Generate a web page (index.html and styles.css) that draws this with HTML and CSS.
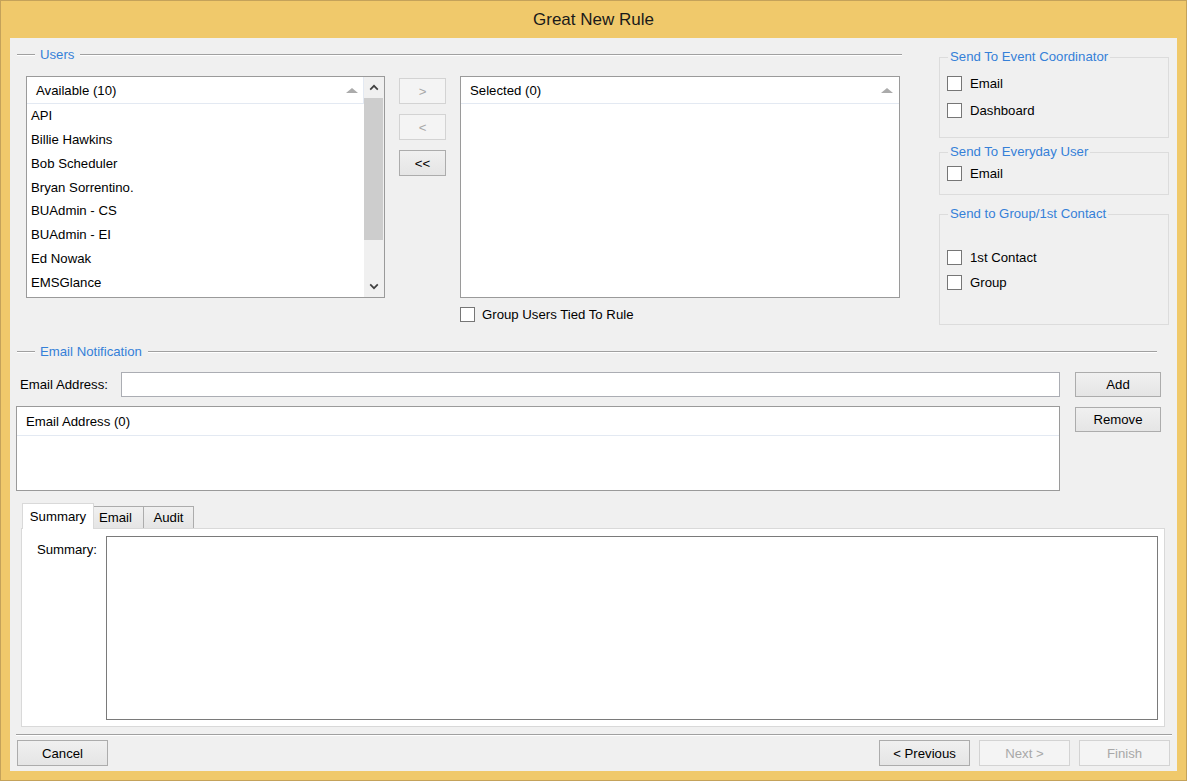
FILE: index.html
```html
<!DOCTYPE html>
<html>
<head>
<meta charset="utf-8">
<title>Great New Rule</title>
<link rel="stylesheet" href="styles.css">
</head>
<body>
<div class="window">
  <div class="titlebar">Great New Rule</div>
  <div class="client">
    <div class="top">
      <div class="users">
        <div class="legend"><span class="lead"></span><span class="ltext">Users</span><span class="rule"></span></div>
        <div class="lists">
          <div class="listbox avail">
            <div class="lb-main">
              <div class="lb-head hd-avail"><span>Available (10)</span><span class="sort"></span></div>
              <div class="lb-item">API</div>
              <div class="lb-item">Billie Hawkins</div>
              <div class="lb-item">Bob Scheduler</div>
              <div class="lb-item">Bryan Sorrentino.</div>
              <div class="lb-item">BUAdmin - CS</div>
              <div class="lb-item">BUAdmin - EI</div>
              <div class="lb-item">Ed Nowak</div>
              <div class="lb-item">EMSGlance</div>
            </div>
            <div class="vscroll">
              <div class="sb-btn"><svg width="10" height="7" viewBox="0 0 10 7"><polyline points="1.2,5.6 5,1.8 8.8,5.6" fill="none" stroke="#404040" stroke-width="1.7"/></svg></div>
              <div class="sb-thumb"></div>
              <div class="sb-track"></div>
              <div class="sb-btn"><svg width="10" height="7" viewBox="0 0 10 7"><polyline points="1.2,1.4 5,5.2 8.8,1.4" fill="none" stroke="#404040" stroke-width="1.7"/></svg></div>
            </div>
          </div>
          <div class="movebtns">
            <div class="btn disabled">&gt;</div>
            <div class="btn disabled">&lt;</div>
            <div class="btn">&lt;&lt;</div>
          </div>
          <div class="selcol">
            <div class="listbox sel">
              <div class="lb-main">
                <div class="lb-head"><span>Selected (0)</span><span class="sort"></span></div>
              </div>
            </div>
            <div class="chk grp"><span class="box"></span><span>Group Users Tied To Rule</span></div>
          </div>
        </div>
      </div>
      <div class="sendcol">
        <fieldset class="gbox g1">
          <legend>Send To Event Coordinator</legend>
          <div class="gc">
            <div class="chk"><span class="box"></span><span>Email</span></div>
            <div class="chk"><span class="box"></span><span>Dashboard</span></div>
          </div>
        </fieldset>
        <fieldset class="gbox g2">
          <legend>Send To Everyday User</legend>
          <div class="gc">
            <div class="chk"><span class="box"></span><span>Email</span></div>
          </div>
        </fieldset>
        <fieldset class="gbox g3">
          <legend>Send to Group/1st Contact</legend>
          <div class="gc">
            <div class="chk"><span class="box"></span><span>1st Contact</span></div>
            <div class="chk"><span class="box"></span><span>Group</span></div>
          </div>
        </fieldset>
      </div>
    </div>

    <div class="legend notif"><span class="lead"></span><span class="ltext">Email Notification</span><span class="rule"></span></div>

    <div class="emailarea">
      <div class="eleft">
        <div class="erow">
          <span class="elabel">Email Address:</span>
          <div class="einput"></div>
        </div>
        <div class="listbox elist">
          <div class="lb-main">
            <div class="lb-head"><span>Email Address (0)</span></div>
          </div>
        </div>
      </div>
      <div class="eright">
        <div class="btn">Add</div>
        <div class="btn">Remove</div>
      </div>
    </div>

    <div class="tabs">
      <div class="tabstrip">
        <div class="tab active">Summary</div>
        <div class="tab t-email">Email</div>
        <div class="tab t-audit">Audit</div>
      </div>
      <div class="tabpage">
        <span class="plabel">Summary:</span>
        <div class="summary-box"></div>
      </div>
    </div>

    <div class="sep"></div>

    <div class="footer">
      <div class="btn fbtn">Cancel</div>
      <div class="fright">
        <div class="btn fbtn">&lt; Previous</div>
        <div class="btn fbtn disabled">Next &gt;</div>
        <div class="btn fbtn disabled">Finish</div>
      </div>
    </div>
  </div>
</div>
</body>
</html>
```

FILE: styles.css
```css
* { box-sizing: border-box; }

body {
  margin: 0;
  font-family: "Liberation Sans", Arial, sans-serif;
  font-size: 13.2px;
  color: #000;
}

.window {
  width: 1187px;
  height: 781px;
  background: #F0C96B;
  border: 1px solid #C4A25A;
  padding: 0 9px 9px 9px;
  display: flex;
  flex-direction: column;
}

.titlebar {
  height: 37px;
  line-height: 37px;
  text-align: center;
  font-size: 17px;
  color: #1a1a1a;
}

.client {
  flex: 1;
  background: #F0F0F0;
  display: flex;
  flex-direction: column;
}

/* ---------- top section ---------- */
.top {
  display: flex;
  margin-top: 10px;
  height: 277px;
}

.users {
  margin-left: 7px;
  width: 885px;
}

.legend {
  display: flex;
  align-items: center;
  height: 14px;
}
.legend .lead {
  width: 18px;
  height: 2px;
  border-top: 1px solid #A0A0A0;
  border-bottom: 1px solid #FFFFFF;
}
.legend .ltext {
  color: #3580D8;
  margin: 0 6px 0 5px;
  line-height: 14px;
}
.legend .rule {
  flex: 1;
  height: 2px;
  border-top: 1px solid #A0A0A0;
  border-bottom: 1px solid #FFFFFF;
}

.lists {
  display: flex;
  align-items: flex-start;
  margin-top: 14px;
}

.listbox {
  border: 1px solid #9A9A9A;
  background: #FFFFFF;
  display: flex;
}
.lb-main {
  flex: 1;
  display: flex;
  flex-direction: column;
  min-width: 0;
}
.lb-head {
  height: 27px;
  display: flex;
  align-items: center;
  justify-content: space-between;
  padding: 0 6px 0 9px;
  border-bottom: 1px solid #E3E9F2;
}
.hd-avail {
  border-right: 1px solid #E3E9F2;
  padding-right: 5px;
}
.sort {
  width: 0;
  height: 0;
  border-left: 6px solid transparent;
  border-right: 6px solid transparent;
  border-bottom: 5px solid #ABABAB;
  margin-top: 1px;
}
.lb-item {
  height: 23.86px;
  line-height: 23.86px;
  padding-left: 4px;
  white-space: nowrap;
}

.avail {
  margin-left: 9px;
  width: 359px;
  height: 222px;
}
.vscroll {
  width: 20px;
  background: #F0F0F0;
  display: flex;
  flex-direction: column;
}
.sb-btn {
  height: 21px;
  display: flex;
  align-items: center;
  justify-content: center;
}
.sb-thumb {
  height: 142px;
  background: #CDCDCD;
  margin: 0 1px 0 0;
}
.sb-track { flex: 1; }

.movebtns {
  margin-left: 14px;
  margin-top: 2px;
  width: 47px;
  display: flex;
  flex-direction: column;
  gap: 10px;
}
.movebtns .btn { height: 26px; }

.selcol {
  margin-left: 14px;
  width: 440px;
}
.sel { height: 222px; }

.btn {
  border: 1px solid #ACACAC;
  background: linear-gradient(#F0F0F0, #E5E5E5);
  display: flex;
  align-items: center;
  justify-content: center;
  color: #000;
}
.btn.disabled {
  border-color: #D3D3D3;
  background: #F4F4F4;
  color: #A8A8A8;
}

.chk {
  display: flex;
  align-items: center;
  gap: 8px;
  height: 24px;
}
.box {
  width: 15px;
  height: 15px;
  border: 1px solid #767676;
  background: #FFFFFF;
  flex: none;
}
.chk.grp {
  margin-top: 4px;
  gap: 7px;
}

/* ---------- right group boxes ---------- */
.sendcol {
  margin-left: 37px;
  margin-top: 1px;
  width: 230px;
}
.gbox {
  margin: 0;
  padding: 0;
  border: 1px solid #DCDCDC;
  min-width: 0;
}
.gbox legend {
  margin-left: 8px;
  padding: 0 2px;
  line-height: 16px;
  color: #3580D8;
}
.gc {
  padding-left: 7px;
  display: flex;
  flex-direction: column;
}
.g1 .gc { height: 72px; padding-top: 6px; gap: 3px; }
.g2 { margin-top: 6px; }
.g2 .gc { height: 34px; padding-top: 1px; }
.g3 { margin-top: 11px; }
.g3 .gc { height: 102px; padding-top: 23px; gap: 1px; }

/* ---------- email notification ---------- */
.notif {
  margin-top: 20px;
  margin-left: 7px;
  width: 1140px;
}

.emailarea {
  display: flex;
  margin-top: 13px;
  margin-left: 6px;
}
.eleft { width: 1044px; }
.erow {
  display: flex;
  align-items: center;
  height: 25px;
}
.elabel {
  width: 105px;
  padding-left: 4px;
  white-space: nowrap;
}
.einput {
  flex: 1;
  height: 25px;
  border: 1px solid #ABADB3;
  background: #FFFFFF;
}
.elist {
  margin-top: 9px;
  height: 85px;
}
.elist .lb-head { height: 29px; }
.eright {
  margin-left: 15px;
  width: 86px;
  display: flex;
  flex-direction: column;
  gap: 10px;
}
.eright .btn { height: 25px; }

/* ---------- tabs ---------- */
.tabs {
  margin-top: 12px;
  margin-left: 11px;
  width: 1144px;
}
.tabstrip {
  display: flex;
  align-items: flex-end;
  height: 25px;
  padding-left: 1px;
}
.tab {
  height: 22px;
  line-height: 21px;
  border: 1px solid #ACACAC;
  border-bottom: none;
  background: linear-gradient(#F0F0F0, #E5E5E5);
  text-align: center;
}
.tab.active {
  width: 72px;
  height: 26px;
  line-height: 25px;
  margin-bottom: -1px;
  background: #FFFFFF;
  border-color: #D9D9D9;
  position: relative;
  z-index: 1;
}
.t-email { width: 50px; padding-right: 6px; border-left: none; }
.t-audit { width: 50px; border-left: none; }

.tabpage {
  height: 199px;
  border: 1px solid #D9D9D9;
  background: #FFFFFF;
  display: flex;
  align-items: flex-start;
  padding: 7px 6px 6px 0;
}
.plabel {
  width: 75px;
  text-align: right;
  margin-top: 6px;
  line-height: 16px;
}
.summary-box {
  margin-left: 9px;
  flex: 1;
  height: 184px;
  border: 1px solid #7A7A7A;
  background: #FFFFFF;
}

/* ---------- footer ---------- */
.sep {
  margin-top: 7px;
  margin-left: 6px;
  width: 1156px;
  height: 2px;
  border-top: 1px solid #A0A0A0;
  border-bottom: 1px solid #FFFFFF;
}
.footer {
  margin-top: 4px;
  display: flex;
  justify-content: space-between;
  padding: 0 7px;
}
.fbtn {
  width: 91px;
  height: 26px;
}
.fright {
  display: flex;
  gap: 9px;
}
```
